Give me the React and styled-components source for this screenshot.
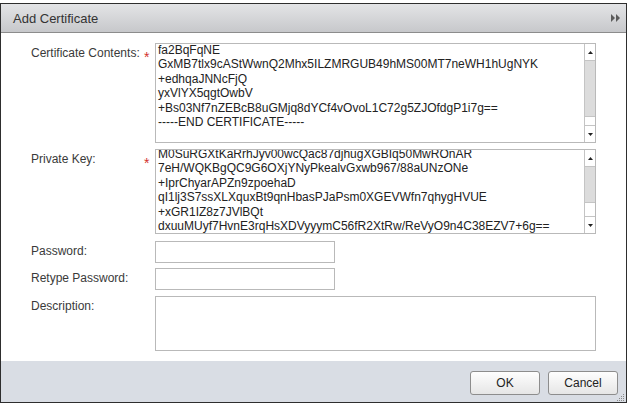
import React from "react";
import styled, { createGlobalStyle } from "styled-components";

const Global = createGlobalStyle`
  html, body { margin: 0; padding: 0; background: #fff; }
  body { font-family: "Liberation Sans", Arial, sans-serif; }
  #root { padding-top: 3px; }
`;

const Dialog = styled.div`
  box-sizing: border-box;
  width: 627px;
  height: 400px;
  border: 1px solid #2e2e2e;
  display: flex;
  flex-direction: column;
  background: #fff;
`;

const Header = styled.div`
  height: 28px;
  flex: none;
  display: flex;
  align-items: center;
  justify-content: space-between;
  padding: 0 6px 0 12px;
  background: linear-gradient(#e3e4e6, #c7c8cb);
  border-bottom: 1px solid #8c8c8c;
`;

const Title = styled.div`
  font-size: 13px;
  color: #333;
`;

const Body = styled.div`
  flex: 1;
  padding: 10px 0 0 30px;
`;

const Row = styled.div`
  display: grid;
  grid-template-columns: 113px 11px auto;
  align-items: start;
  margin-bottom: ${(p) => p.$gap || 0}px;
`;

const Label = styled.div`
  font-size: 12px;
  line-height: 14px;
  color: #3a3a3a;
  padding-top: 3px;
`;

const Required = styled.div`
  color: #d2322d;
  font-size: 14px;
  line-height: 14px;
  padding-top: 7px;
`;

const TextBox = styled.div`
  box-sizing: border-box;
  width: 441px;
  height: ${(p) => p.$h}px;
  border: 1px solid #b9b9b9;
  display: flex;
  background: #fff;
  overflow: hidden;
`;

const TextContent = styled.div`
  flex: 1;
  overflow: hidden;
  padding-left: 2px;
`;

const Lines = styled.div`
  margin-top: ${(p) => p.$offset}px;
  font-size: 12px;
  line-height: 14.4px;
  color: #222;
  white-space: pre;
`;

const ScrollBar = styled.div`
  width: 10px;
  flex: none;
  border-left: 1px solid #c4c4c4;
  display: flex;
  flex-direction: column;
`;

const ScrollButton = styled.div`
  height: 16px;
  flex: none;
  display: flex;
  align-items: center;
  justify-content: center;
  background: #fff;
  ${(p) => (p.$dir === "up" ? "border-bottom" : "border-top")}: 1px solid #c4c4c4;
`;

const Thumb = styled.div`
  height: ${(p) => p.$h}px;
  flex: none;
  background: #dcdcdc;
`;

const Track = styled.div`
  flex: 1;
  border-top: 1px solid #c4c4c4;
  background: #fff;
`;

const Input = styled.input`
  box-sizing: border-box;
  width: 180px;
  height: 22px;
  margin: 0;
  border: 1px solid #b9b9b9;
  font: 12px "Liberation Sans", Arial, sans-serif;
  outline: none;
`;

const Area = styled.textarea`
  box-sizing: border-box;
  width: 441px;
  height: 55px;
  margin: 0;
  border: 1px solid #b9b9b9;
  resize: none;
  font: 12px "Liberation Sans", Arial, sans-serif;
  outline: none;
  display: block;
`;

const Footer = styled.div`
  position: relative;
  height: 41px;
  flex: none;
  box-sizing: border-box;
  background: #d9dde4;
  display: flex;
  justify-content: flex-end;
  align-items: flex-start;
  gap: 8px;
  padding: 10px 8px 0 0;
`;

const Button = styled.button`
  box-sizing: border-box;
  width: 70px;
  height: 24px;
  margin: 0;
  border: 1px solid #8d8d8d;
  border-radius: 3px;
  background: linear-gradient(#fefefe, #e6e6e6);
  font: 12px "Liberation Sans", Arial, sans-serif;
  color: #222;
  padding: 0;
`;

const Grip = styled.svg`
  position: absolute;
  right: 2px;
  bottom: 1px;
`;

const Arrow = ({ up }) => (
  <svg width="5" height="3" viewBox="0 0 5 3">
    <polygon points={up ? "0,3 2.5,0 5,3" : "0,0 2.5,3 5,0"} fill="#222" />
  </svg>
);

const Scroll = ({ thumb }) => (
  <ScrollBar>
    <ScrollButton $dir="up">
      <Arrow up />
    </ScrollButton>
    <Thumb $h={thumb} />
    <Track />
    <ScrollButton $dir="down">
      <Arrow />
    </ScrollButton>
  </ScrollBar>
);

const certLines = [
  "fa2BqFqNE",
  "GxMB7tlx9cAStWwnQ2Mhx5ILZMRGUB49hMS00MT7neWH1hUgNYK",
  "+edhqaJNNcFjQ",
  "yxVlYX5qgtOwbV",
  "+Bs03Nf7nZEBcB8uGMjq8dYCf4vOvoL1C72g5ZJOfdgP1i7g==",
  "-----END CERTIFICATE-----",
];

const keyLines = [
  "M0SuRGXtKaRrhJyv00wcQac87djhugXGBIq50MwROnAR",
  "7eH/WQKBgQC9G6OXjYNyPkealvGxwb967/88aUNzONe",
  "+IprChyarAPZn9zpoehaD",
  "qI1lj3S7ssXLXquxBt9qnHbasPJaPsm0XGEVWfn7qhygHVUE",
  "+xGR1IZ8z7JVlBQt",
  "dxuuMUyf7HvnE3rqHsXDVyyymC56fR2XtRw/ReVyO9n4C38EZV7+6g==",
];

export default function App() {
  return (
    <>
      <Global />
      <Dialog>
        <Header>
          <Title>Add Certificate</Title>
          <svg width="9" height="8" viewBox="0 0 9 8">
            <polygon points="0,0 4,4 0,8" fill="#5b5b5b" />
            <polygon points="5,0 9,4 5,8" fill="#5b5b5b" />
          </svg>
        </Header>
        <Body>
          <Row $gap={6}>
            <Label>Certificate Contents:</Label>
            <Required>*</Required>
            <TextBox $h={100}>
              <TextContent>
                <Lines $offset={-1}>{certLines.join("\n")}</Lines>
              </TextContent>
              <Scroll thumb={55} />
            </TextBox>
          </Row>
          <Row $gap={7}>
            <Label>Private Key:</Label>
            <Required>*</Required>
            <TextBox $h={85}>
              <TextContent>
                <Lines $offset={-3}>{keyLines.join("\n")}</Lines>
              </TextContent>
              <Scroll thumb={35} />
            </TextBox>
          </Row>
          <Row $gap={5}>
            <Label>Password:</Label>
            <span />
            <Input type="password" />
          </Row>
          <Row $gap={6}>
            <Label>Retype Password:</Label>
            <span />
            <Input type="password" />
          </Row>
          <Row>
            <Label>Description:</Label>
            <span />
            <Area />
          </Row>
        </Body>
        <Footer>
          <Button>OK</Button>
          <Button>Cancel</Button>
          <Grip width="7" height="7" viewBox="0 0 7 7">
            {[
              [6, 0], [6, 2], [4, 2], [6, 4], [4, 4], [2, 4],
              [6, 6], [4, 6], [2, 6], [0, 6],
            ].map(([x, y]) => (
              <rect key={`${x}-${y}`} x={x} y={y} width="1" height="1" fill="#8a8a8a" />
            ))}
          </Grip>
        </Footer>
      </Dialog>
    </>
  );
}
